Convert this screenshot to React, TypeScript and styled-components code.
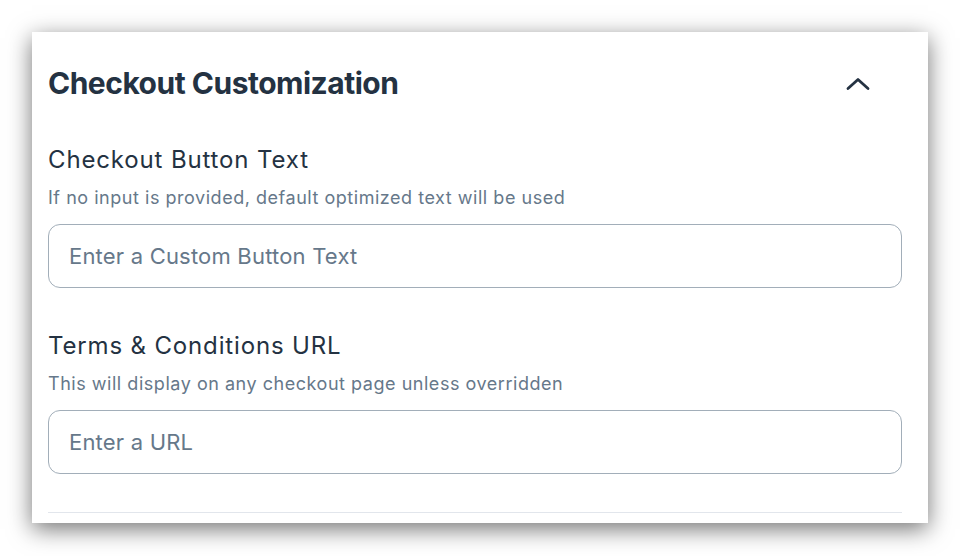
import React, { useState } from 'react'
import styled, { createGlobalStyle } from 'styled-components'

const GlobalStyle = createGlobalStyle`
  html, body {
    margin: 0;
    padding: 0;
    background: #ffffff;
  }
  body {
    font-family: Inter, "Noto Sans", sans-serif;
    -webkit-font-smoothing: antialiased;
  }
`

const Page = styled.div`
  padding: 32px;
  width: 960px;
  height: 556px;
  box-sizing: border-box;
`

const Card = styled.section`
  width: 896px;
  height: 491px;
  box-sizing: border-box;
  background: #ffffff;
  box-shadow: 0 6px 22px rgba(0, 0, 0, 0.55);
  padding: 33px 26px 0 16px;
  display: flex;
  flex-direction: column;
`

const Header = styled.div`
  display: flex;
  align-items: center;
  justify-content: space-between;
  height: 36px;
`

const Title = styled.h2`
  margin: 0;
  font-size: 30px;
  line-height: 36px;
  font-weight: 700;
  letter-spacing: -0.5px;
  color: #243242;
`

const ToggleButton = styled.button`
  border: 0;
  background: none;
  padding: 0;
  margin-right: 28px;
  width: 32px;
  height: 32px;
  display: flex;
  align-items: center;
  justify-content: center;
  cursor: pointer;
  color: #243242;
`

const Body = styled.div`
  display: flex;
  flex-direction: column;
  gap: 42px;
  margin-top: 43px;
`

const Field = styled.div`
  display: flex;
  flex-direction: column;
`

const Label = styled.label`
  font-size: 24px;
  line-height: 32px;
  font-weight: 400;
  letter-spacing: 0.85px;
  color: #243242;
`

const Hint = styled.p`
  margin: 10px 0 14px;
  font-size: 18px;
  line-height: 24px;
  letter-spacing: 0.53px;
  color: #66788a;
`

const Input = styled.input`
  height: 64px;
  box-sizing: border-box;
  border: 1px solid #a2aeb9;
  border-radius: 12px;
  padding: 0 20px;
  font-family: inherit;
  font-size: 22px;
  letter-spacing: 0.2px;
  color: #243242;
  outline: none;

  &::placeholder {
    color: #66788a;
  }
`

const Divider = styled.hr`
  margin: 38px 0 0;
  border: 0;
  border-top: 1px solid #e2e6ec;
`

const fields = [
  {
    id: 'button-text',
    label: 'Checkout Button Text',
    hint: 'If no input is provided, default optimized text will be used',
    placeholder: 'Enter a Custom Button Text',
  },
  {
    id: 'terms-url',
    label: 'Terms & Conditions URL',
    hint: 'This will display on any checkout page unless overridden',
    placeholder: 'Enter a URL',
  },
]

export default function App() {
  const [open, setOpen] = useState(true)

  return (
    <Page>
      <GlobalStyle />
      <Card>
        <Header>
          <Title>Checkout Customization</Title>
          <ToggleButton onClick={() => setOpen(!open)} aria-label="Toggle section">
            <svg width="24" height="24" viewBox="0 0 24 24" fill="none">
              <path
                d={open ? 'M2 17.5L12 8.5L22 17.5' : 'M2 8.5L12 17.5L22 8.5'}
                stroke="currentColor"
                strokeWidth="2.8"
                strokeLinecap="round"
                strokeLinejoin="round"
              />
            </svg>
          </ToggleButton>
        </Header>
        {open && (
          <Body>
            {fields.map((f) => (
              <Field key={f.id}>
                <Label htmlFor={f.id}>{f.label}</Label>
                <Hint>{f.hint}</Hint>
                <Input id={f.id} placeholder={f.placeholder} />
              </Field>
            ))}
          </Body>
        )}
        <Divider />
      </Card>
    </Page>
  )
}
